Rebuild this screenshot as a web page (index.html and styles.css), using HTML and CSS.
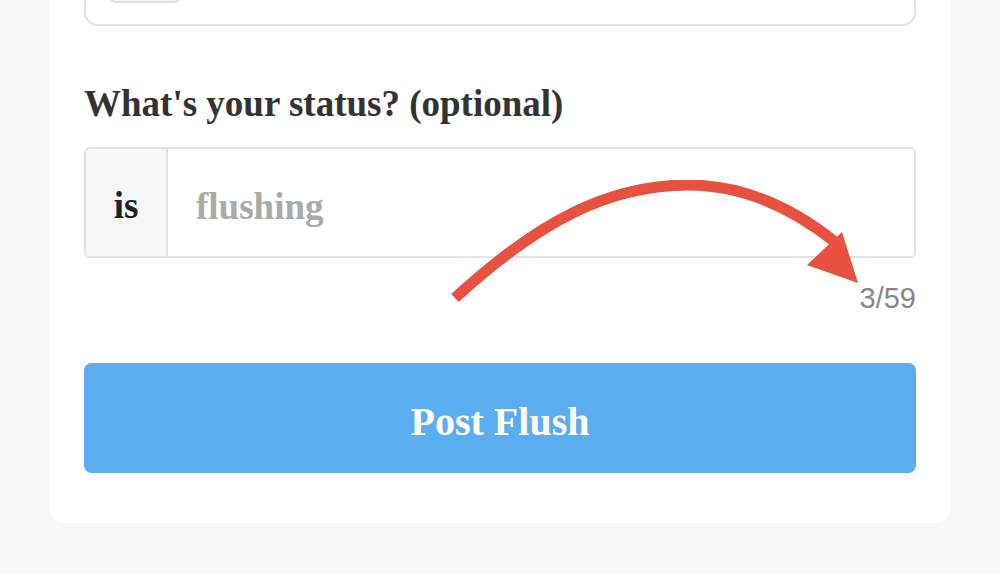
FILE: index.html
```html
<!DOCTYPE html>
<html lang="en">

<head>
  <meta charset="UTF-8" />
  <meta name="viewport" content="width=device-width, initial-scale=1.0" />
  <title>Post Flush</title>
  <link rel="stylesheet" href="styles.css">
</head>

<body>
  <div class="card">
    <div class="caja-previa">
      <span class="mini-boton"></span>
    </div>

    <label class="etiqueta" for="estado">What's your status? (optional)</label>

    <div class="grupo">
      <span class="prefijo">is</span>
      <input type="text" id="estado" placeholder="flushing" />
    </div>

    <div class="contador">3/59</div>

    <button type="button" class="publicar">Post Flush</button>

    <!-- flecha roja de la captura -->
    <svg class="flecha" width="460" height="140" viewBox="0 0 460 140">
      <path d="M5 118 C 90 40, 160 5, 238 5 C 295 5, 345 30, 385 62" fill="none" stroke="#e8503f" stroke-width="11" />
      <polygon points="357,85 392,52 408,103" fill="#e8503f" />
    </svg>
  </div>
</body>

</html>
```

FILE: styles.css
```css
body {
  margin: 0;
  padding: 0;
  background: #f8f8f8;
  font-family: "Liberation Serif", serif;
  color: #333;
}

.card {
  position: relative;
  display: flex;
  flex-direction: column;
  margin: -57px 50px 0;
  padding: 0 34px 50px;
  background: #fff;
  border-radius: 0 0 14px 14px;
}

.caja-previa {
  height: 81px;
  border: 2px solid #e2e2e2;
  border-top: none;
  border-radius: 0 0 14px 14px;
  padding: 0 22px;
}

.mini-boton {
  display: block;
  width: 70px;
  height: 58px;
  border: 2px solid #e2e2e2;
  border-top: none;
  border-radius: 0 0 8px 8px;
  background: #f7f7f7;
}

.etiqueta {
  margin-top: 57px;
  font-size: 37px;
  line-height: 42px;
  font-weight: bold;
  color: #333;
}

.grupo {
  display: flex;
  margin-top: 22px;
  height: 111px;
  box-sizing: border-box;
  border: 2px solid #e2e2e2;
  border-radius: 6px;
  overflow: hidden;
}

.prefijo {
  display: flex;
  align-items: center;
  justify-content: center;
  width: 82px;
  padding-top: 6px;
  box-sizing: border-box;
  background: #f7f7f7;
  border-right: 2px solid #e2e2e2;
  font-size: 37px;
  font-weight: bold;
  color: #222;
}

.grupo input {
  flex: 1;
  border: none;
  outline: none;
  padding: 8px 28px 0;
  font-family: "Liberation Serif", serif;
  font-size: 37px;
  font-weight: bold;
  color: #333;
}

.grupo input::placeholder {
  color: #aaa;
}

.contador {
  margin-top: 22px;
  text-align: right;
  font-family: "Liberation Sans", sans-serif;
  font-size: 29px;
  line-height: 36px;
  color: #888;
}

.publicar {
  margin-top: 47px;
  height: 110px;
  padding-top: 8px;
  border: none;
  border-radius: 8px;
  background: #5aadee;
  color: #fff;
  font-family: "Liberation Serif", serif;
  font-size: 40px;
  font-weight: bold;
}

.flecha {
  position: absolute;
  left: 400px;
  top: 237px;
}
```
